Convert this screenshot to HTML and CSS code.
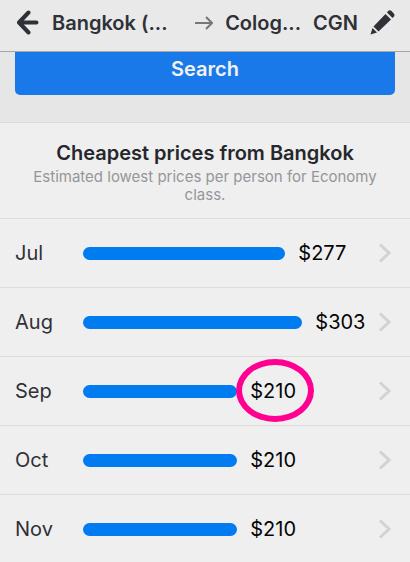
FILE: index.html
```html
<!DOCTYPE html>
<html lang="en">
<head>
    <meta charset="UTF-8">
    <meta name="viewport" content="width=device-width, initial-scale=1.0">
    <title>Cheapest prices from Bangkok</title>
    <link rel="stylesheet" href="styles.css">
</head>
<body>
    <header class="topbar">
        <button type="button" class="icon-btn" aria-label="Back">
            <svg width="24" height="26" viewBox="0 0 24 26" fill="none" stroke="#2f3137" stroke-width="4" stroke-linecap="round" stroke-linejoin="round">
                <path d="M12.500 2.500 L3 12.500 L12.500 22.500 M4 12.500 H20.500"/>
            </svg>
        </button>
        <div class="route">
            <span class="from">Bangkok (...</span>
            <svg class="to-arrow" width="20" height="14" viewBox="0 0 20 14" fill="none" stroke="#777" stroke-width="2">
                <path d="M2 7 H19 M13 1 L19 7 L13 13"/>
            </svg>
            <span class="to">Colog...</span>
            <span class="code">CGN</span>
        </div>
        <button type="button" class="icon-btn" aria-label="Edit search">
            <svg width="26" height="26" viewBox="0 0 26 26" fill="#2f3137">
                <path d="M15.500 4 L21 9.500 L8.500 21.500 L3.500 16.500 Z"/>
                <path d="M17 2.500 L18 1.200 Q19.500 -0.500 21.500 1 L23.800 3.500 Q25 5 24 6.500 L22.500 8 Z"/>
                <path d="M2.500 18 L7 22.500 L0.500 24.500 Z"/>
            </svg>
        </button>
    </header>

    <main>
        <div class="search">
            <button type="button" class="search-btn">Search</button>
        </div>

        <section class="prices">
            <div class="prices-head">
                <h2>Cheapest prices from Bangkok</h2>
                <p>Estimated lowest prices per person for Economy class.</p>
            </div>
            <ul class="months">
                <li>
                    <a href="#jul" class="month">
                        <span class="name">Jul</span>
                        <span class="track"><span class="bar" style="width: 71.5%"></span><span class="price">$277</span></span>
                        <svg class="chevron" width="12" height="20" viewBox="0 0 12 20"><path d="M1 1.500 L10 10 L1 18.500"/></svg>
                    </a>
                </li>
                <li>
                    <a href="#aug" class="month">
                        <span class="name">Aug</span>
                        <span class="track"><span class="bar" style="width: 77.5%"></span><span class="price">$303</span></span>
                        <svg class="chevron" width="12" height="20" viewBox="0 0 12 20"><path d="M1 1.500 L10 10 L1 18.500"/></svg>
                    </a>
                </li>
                <li>
                    <a href="#sep" class="month">
                        <span class="name">Sep</span>
                        <span class="track"><span class="bar" style="width: 54.5%"></span><span class="price marked">$210</span></span>
                        <svg class="chevron" width="12" height="20" viewBox="0 0 12 20"><path d="M1 1.500 L10 10 L1 18.500"/></svg>
                    </a>
                </li>
                <li>
                    <a href="#oct" class="month">
                        <span class="name">Oct</span>
                        <span class="track"><span class="bar" style="width: 54.5%"></span><span class="price">$210</span></span>
                        <svg class="chevron" width="12" height="20" viewBox="0 0 12 20"><path d="M1 1.500 L10 10 L1 18.500"/></svg>
                    </a>
                </li>
                <li>
                    <a href="#nov" class="month">
                        <span class="name">Nov</span>
                        <span class="track"><span class="bar" style="width: 54.5%"></span><span class="price">$210</span></span>
                        <svg class="chevron" width="12" height="20" viewBox="0 0 12 20"><path d="M1 1.500 L10 10 L1 18.500"/></svg>
                    </a>
                </li>
            </ul>
        </section>
    </main>
</body>
</html>
```
FILE: styles.css
```css
* {
    box-sizing: border-box;
}
body {
    margin: 0;
    background-color: #efefef;
    color: #2f3137;
    font-family: Inter, "Liberation Sans", sans-serif;
    font-size: 20px;
    line-height: 24px;
}
button {
    border: none;
    font: inherit;
    cursor: pointer;
}

/* header stays on top while the page scrolls under it */
.topbar {
    position: fixed;
    top: 0;
    left: 0;
    right: 0;
    z-index: 1;
    display: flex;
    align-items: center;
    height: 52px;
    padding: 0 14px 6px 16px;
    background-color: #e9e9e9;
    border-bottom: 1px solid #a6a6a6;
}
.icon-btn {
    display: flex;
    padding: 0;
    background: none;
    color: inherit;
}
.route {
    display: flex;
    flex: 1;
    align-items: center;
    gap: 12px;
    padding: 0 12px;
    font-weight: 600;
    white-space: nowrap;
}
.to-arrow {
    margin-left: auto;
}

.search {
    padding: 43px 15px 27px;
    background-color: #e6e6e6;
    border-bottom: 1px solid #dcdcdc;
}
.search-btn {
    display: block;
    width: 100%;
    height: 52px;
    border-radius: 5px;
    background-color: #1a79e9;
    color: #f1f1f1;
    font-weight: 600;
}

.prices-head {
    padding: 18px 20px 14px;
    text-align: center;
}
.prices-head h2 {
    margin: 0;
    color: #25272d;
    font-size: 20px;
    font-weight: 600;
}
.prices-head p {
    margin: 3px 0 0;
    color: #96969a;
    font-size: 15px;
    line-height: 18px;
}

.months {
    margin: 0;
    padding: 0;
    list-style: none;
}
.month {
    display: flex;
    align-items: center;
    height: 69px;
    padding: 0 19px 0 15px;
    border-top: 1px solid #dcdcdc;
    color: inherit;
    text-decoration: none;
}
.name {
    width: 68px;
}
.track {
    display: flex;
    flex: 1;
    align-items: center;
    gap: 13px;
    margin-right: 13px;
}
.bar {
    height: 13px;
    border-radius: 7px;
    background-color: #007cf0;
}
.price {
    position: relative;
    color: #050505;
}
.marked::after {
    content: "";
    position: absolute;
    top: -20px;
    right: -18px;
    bottom: -19px;
    left: -14px;
    border: 6px solid #ff0090;
    border-radius: 50%;
}
.chevron {
    fill: none;
    stroke: #d2d2d2;
    stroke-width: 3;
}
```
